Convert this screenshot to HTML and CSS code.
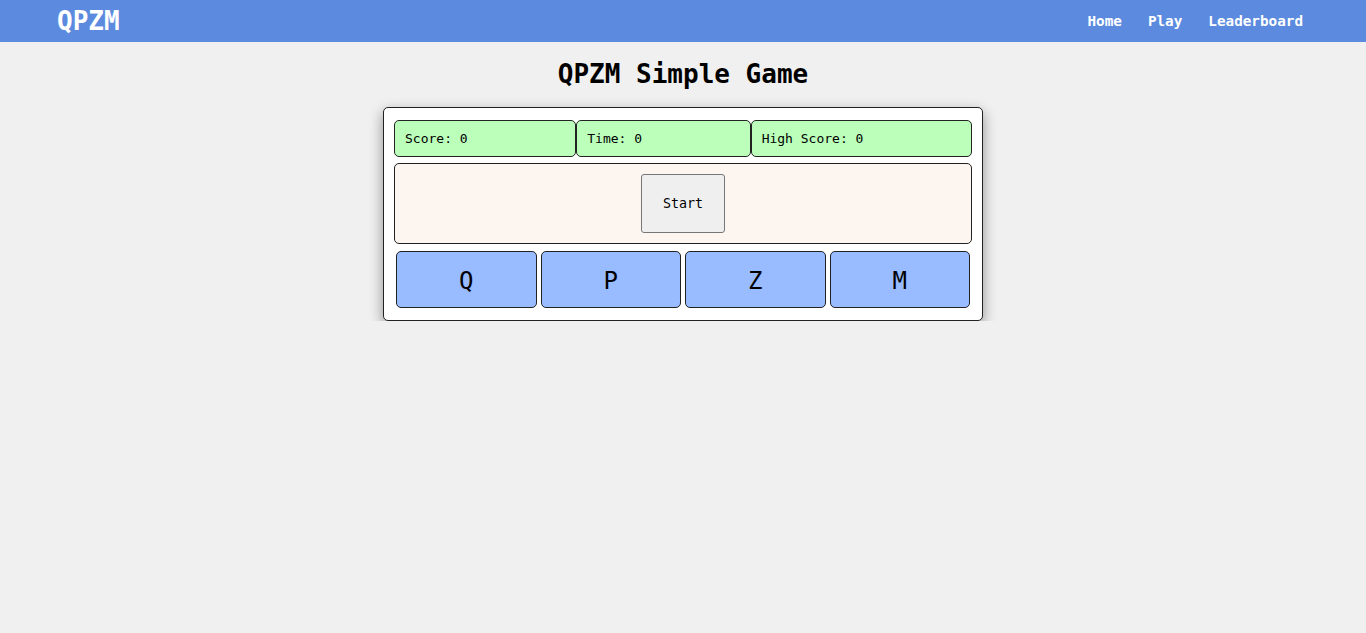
FILE: index.html
```html
<!DOCTYPE html>
<html lang="en">
<head>
<meta charset="utf-8">
<title>QPZM Simple Game</title>
<link rel="stylesheet" href="styles.css">
</head>
<body>
<header class="topbar">
  <div class="logo">QPZM</div>
  <nav class="links">
    <a href="#">Home</a>
    <a href="#">Play</a>
    <a href="#">Leaderboard</a>
  </nav>
</header>
<main class="main">
  <h1 class="title">QPZM Simple Game</h1>
  <section class="card">
    <div class="stats">
      <div class="stat">Score: 0</div>
      <div class="stat">Time: 0</div>
      <div class="stat">High Score: 0</div>
    </div>
    <div class="arena">
      <button class="start">Start</button>
    </div>
    <div class="keys">
      <button class="key">Q</button>
      <button class="key">P</button>
      <button class="key">Z</button>
      <button class="key">M</button>
    </div>
  </section>
</main>
</body>
</html>
```
FILE: styles.css
```css
* { box-sizing: border-box; }
html, body { margin: 0; padding: 0; }
body {
  background: #f0f0f0;
  font-family: "DejaVu Sans Mono", monospace;
  color: #000;
}
.topbar {
  height: 42px;
  background: #5b8ade;
  display: flex;
  align-items: center;
  justify-content: space-between;
  padding: 0 63px 0 57px;
}
.logo {
  color: #fff;
  font-weight: bold;
  font-size: 26px;
}
.links {
  display: flex;
  gap: 26px;
}
.links a {
  color: #fff;
  font-weight: bold;
  font-size: 14.3px;
  text-decoration: none;
}
.main {
  display: flex;
  flex-direction: column;
  align-items: center;
}
.title {
  font-size: 26px;
  font-weight: bold;
  margin: 17px 0 18px;
  line-height: 30px;
}
.card {
  width: 600px;
  background: #fff;
  border: 1px solid #222;
  border-radius: 5px;
  padding: 12px 10px 10px;
  box-shadow: 0 5px 14px rgba(0,0,0,0.4);
}
.stats {
  display: flex;
}
.stat {
  flex: 1 1 auto;
  background: #bbffbb;
  border: 1px solid #222;
  border-radius: 5px;
  padding: 10px;
  font-size: 13px;
  line-height: 15px;
  white-space: nowrap;
}
.arena {
  margin-top: 6px;
  background: #fdf5f0;
  border: 1px solid #222;
  border-radius: 5px;
  padding: 10px;
  display: flex;
  justify-content: center;
}
.start {
  font-family: "DejaVu Sans Mono", monospace;
  font-size: 13.33px;
  line-height: 17px;
  padding: 20px 21px;
  background: #efefef;
  border: 1px solid #767676;
  border-radius: 3px;
  color: #000;
}
.keys {
  display: flex;
  margin-top: 5px;
}
.key {
  flex: 1 1 0;
  margin: 2px;
  height: 57px;
  background: #99bbff;
  border: 1px solid #222;
  border-radius: 5px;
  font-family: "DejaVu Sans Mono", monospace;
  font-size: 24px;
  color: #000;
  padding: 2px 0 0;
}
```
